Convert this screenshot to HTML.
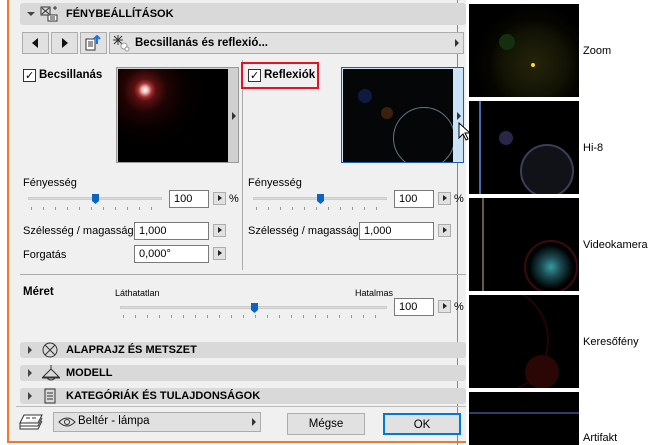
<!DOCTYPE html>
<html><head><meta charset="utf-8"><style>
*{box-sizing:border-box;margin:0;padding:0}
body{width:667px;height:445px;overflow:hidden;background:#fff;font-family:"Liberation Sans",sans-serif;font-size:11px;color:#000;position:relative}
.a{position:absolute}
.dlg{left:7px;top:0;width:459px;height:443px;background:#f0f0f0;border-left:2px solid #f07a28;border-bottom:2px solid #f07a28}
.bar{background:#d9d9d9;border-radius:3px}
.b{font-weight:bold}
.inp{background:#fff;border:1px solid #7a7a7a;height:18px;padding:2px 4px;font-size:11px}
.arr{width:13px;height:13px;background:#e1e1e1;border:1px solid #adadad}
.arr:after{content:"";position:absolute;left:4px;top:2px;border-left:4px solid #222;border-top:3.5px solid transparent;border-bottom:3.5px solid transparent}
.cb{width:13px;height:13px;border:1px solid #333;background:#fff}
.track{height:3px;background:#dcdcdc;border:1px solid #ccc}
.thumb{width:7px;height:10px;background:#0a64c8;clip-path:polygon(0 0,100% 0,100% 70%,50% 100%,0 70%)}
.btn{background:#e1e1e1;border:1px solid #adadad;text-align:center;line-height:20px}
.th{left:469px;width:110px;height:93px;background:#000;overflow:hidden}
.lab{left:583px;font-size:11px}
</style></head><body>
<div class="a dlg"></div>
<div class="a" style="left:457px;top:0;width:1px;height:445px;background:#888"></div>
<!-- header -->
<div class="a bar" style="left:20px;top:3px;width:446px;height:22px"></div>
<div class="a" style="left:27px;top:12px;border-top:4px solid #444;border-left:4px solid transparent;border-right:4px solid transparent"></div>
<svg class="a" style="left:40px;top:6px" width="18" height="16"><rect x="1" y="1" width="9" height="8" fill="none" stroke="#333"/><path d="M2 2l7 6M9 2l-7 6" stroke="#333"/><rect x="8" y="9" width="9" height="6" fill="#fff" stroke="#333"/><path d="M10 11h5M10 13h5M13 2h4M15 0v4" stroke="#333"/></svg>
<div class="a b" style="left:66px;top:8px;font-size:11px">FÉNYBEÁLLÍTÁSOK</div>
<!-- toolbar -->
<div class="a btn" style="left:22px;top:32px;width:27px;height:22px"></div>
<div class="a" style="left:32px;top:38px;border-right:6px solid #111;border-top:5px solid transparent;border-bottom:5px solid transparent"></div>
<div class="a btn" style="left:51px;top:32px;width:27px;height:22px"></div>
<div class="a" style="left:62px;top:38px;border-left:6px solid #111;border-top:5px solid transparent;border-bottom:5px solid transparent"></div>
<div class="a btn" style="left:80px;top:32px;width:27px;height:22px"></div>
<svg class="a" style="left:84px;top:35px" width="18" height="16"><rect x="2" y="4" width="9" height="11" fill="#fff" stroke="#333"/><path d="M4 7h5M4 9h5M4 11h5" stroke="#333"/><path d="M13 9V2M10 4l3-3 3 3" stroke="#1a73e8" stroke-width="2" fill="none"/></svg>
<div class="a btn" style="left:109px;top:32px;width:355px;height:22px"></div>
<svg class="a" style="left:112px;top:34px" width="18" height="18"><path d="M6 1v10M1 6h10M2 2l8 8M10 2l-8 8" stroke="#333"/><circle cx="12" cy="12" r="3" fill="#fff" stroke="#999"/><circle cx="15" cy="15" r="2" fill="#fff" stroke="#999"/></svg>
<div class="a b" style="left:135px;top:37px;font-size:11.5px">Becsillanás és reflexió...</div>
<div class="a" style="left:455px;top:39px;border-left:4px solid #333;border-top:4px solid transparent;border-bottom:4px solid transparent"></div>
<!-- checkboxes & previews -->
<div class="a cb" style="left:23px;top:69px"></div><div class="a" style="left:25px;top:69px;font-size:11px">✓</div>
<div class="a b" style="left:39px;top:69px;font-size:11.5px">Becsillanás</div>
<div class="a" style="left:116px;top:67px;width:123px;height:96px;background:#d0d0d0;border:1px solid #999"></div>
<div class="a" style="left:118px;top:69px;width:110px;height:93px;background:radial-gradient(circle at 27px 21px,#fff 0,#f4c0c0 3px,#a03030 7px,#5a1010 11px,#200404 22px,#080000 40px,#000 60px)"></div>
<div class="a" style="left:232px;top:112px;border-left:4px solid #333;border-top:4px solid transparent;border-bottom:4px solid transparent"></div>
<div class="a" style="left:242px;top:60px;width:1px;height:210px;background:#aaa"></div>
<div class="a" style="left:241px;top:62px;width:78px;height:27px;border:2px solid #e81123"></div>
<div class="a cb" style="left:248px;top:69px"></div><div class="a" style="left:250px;top:69px;font-size:11px">✓</div>
<div class="a b" style="left:264px;top:69px;font-size:11.5px">Reflexiók</div>
<div class="a" style="left:341px;top:67px;width:123px;height:96px;background:#cce4f7;border:1px solid #1a5fb4"></div>
<div class="a" style="left:343px;top:69px;width:110px;height:93px;background:#050608;overflow:hidden">
<div class="a" style="left:50px;top:38px;width:62px;height:62px;border-radius:50%;border:1px solid #5a7a80"></div>
<div class="a" style="left:15px;top:20px;width:14px;height:14px;border-radius:50%;background:#101a40"></div>
<div class="a" style="left:38px;top:38px;width:12px;height:12px;border-radius:50%;background:#3a220a"></div>
</div>
<div class="a" style="left:457px;top:112px;border-left:4px solid #333;border-top:4px solid transparent;border-bottom:4px solid transparent"></div>
<!-- left column sliders -->
<div class="a" style="left:23px;top:177px">Fényesség</div>
<div class="a track" style="left:28px;top:197px;width:134px"></div>
<div class="a thumb" style="left:92px;top:194px"></div>
<div class="a" style="left:31px;top:207px;width:130px;height:3px;background:repeating-linear-gradient(90deg,#999 0 1px,transparent 1px 12px)"></div>
<div class="a inp" style="left:169px;top:190px;width:40px">100</div>
<div class="a arr" style="left:213px;top:192px"></div>
<div class="a" style="left:229px;top:193px">%</div>
<div class="a" style="left:23px;top:225px">Szélesség / magasság</div>
<div class="a inp" style="left:134px;top:222px;width:75px">1,000</div>
<div class="a arr" style="left:213px;top:224px"></div>
<div class="a" style="left:23px;top:249px">Forgatás</div>
<div class="a inp" style="left:134px;top:245px;width:75px">0,000°</div>
<div class="a arr" style="left:213px;top:247px"></div>
<!-- right column -->
<div class="a" style="left:248px;top:177px">Fényesség</div>
<div class="a track" style="left:253px;top:197px;width:134px"></div>
<div class="a thumb" style="left:317px;top:194px"></div>
<div class="a" style="left:256px;top:207px;width:130px;height:3px;background:repeating-linear-gradient(90deg,#999 0 1px,transparent 1px 12px)"></div>
<div class="a inp" style="left:394px;top:190px;width:40px">100</div>
<div class="a arr" style="left:438px;top:192px"></div>
<div class="a" style="left:454px;top:193px">%</div>
<div class="a" style="left:248px;top:225px">Szélesség / magasság</div>
<div class="a inp" style="left:359px;top:222px;width:75px">1,000</div>
<div class="a arr" style="left:438px;top:224px"></div>
<div class="a" style="left:20px;top:274px;width:446px;height:1px;background:#aaa"></div>
<!-- Méret -->
<div class="a b" style="left:23px;top:286px;font-size:11.5px">Méret</div>
<div class="a" style="left:115px;top:288px;font-size:9px">Láthatatlan</div>
<div class="a" style="left:355px;top:288px;font-size:9px">Hatalmas</div>
<div class="a track" style="left:120px;top:306px;width:267px"></div>
<div class="a thumb" style="left:251px;top:303px"></div>
<div class="a" style="left:123px;top:315px;width:264px;height:3px;background:repeating-linear-gradient(90deg,#999 0 1px,transparent 1px 12px)"></div>
<div class="a inp" style="left:394px;top:298px;width:40px">100</div>
<div class="a arr" style="left:438px;top:300px"></div>
<div class="a" style="left:454px;top:301px">%</div>
<!-- sections -->
<div class="a bar" style="left:20px;top:342px;width:446px;height:16px"></div>
<div class="a bar" style="left:20px;top:365px;width:446px;height:16px"></div>
<div class="a bar" style="left:20px;top:388px;width:446px;height:16px"></div>
<div class="a" style="left:28px;top:346px;border-left:4px solid #444;border-top:4px solid transparent;border-bottom:4px solid transparent"></div>
<div class="a" style="left:28px;top:369px;border-left:4px solid #444;border-top:4px solid transparent;border-bottom:4px solid transparent"></div>
<div class="a" style="left:28px;top:392px;border-left:4px solid #444;border-top:4px solid transparent;border-bottom:4px solid transparent"></div>
<svg class="a" style="left:41px;top:342px" width="18" height="16"><circle cx="9" cy="8" r="7" fill="none" stroke="#333"/><path d="M4 3l10 10M14 3L4 13" stroke="#333"/></svg>
<svg class="a" style="left:40px;top:364px" width="22" height="18"><path d="M11 1v4M3 13L11 5l8 8z" fill="none" stroke="#333"/><path d="M2 14h18M7 14q4 4 8 0" fill="none" stroke="#333"/></svg>
<svg class="a" style="left:44px;top:388px" width="12" height="16"><rect x="1" y="1" width="10" height="14" fill="none" stroke="#333"/><path d="M3 5h6M3 8h6M3 11h6" stroke="#333"/></svg>
<div class="a b" style="left:66px;top:344px;font-size:11px">ALAPRAJZ ÉS METSZET</div>
<div class="a b" style="left:66px;top:367px;font-size:11px">MODELL</div>
<div class="a b" style="left:66px;top:390px;font-size:11px">KATEGÓRIÁK ÉS TULAJDONSÁGOK</div>
<div class="a" style="left:16px;top:406px;width:450px;height:1px;background:#bbb"></div>
<!-- bottom -->
<svg class="a" style="left:18px;top:413px" width="26" height="18"><path d="M6 2h18l-4 8H2z M2 10v3h18l4-8 M2 13v3h18l4-8" fill="#fff" stroke="#333"/><path d="M8 5h4M14 5h4" stroke="#333"/></svg>
<div class="a btn" style="left:53px;top:412px;width:208px;height:20px"></div>
<svg class="a" style="left:58px;top:417px" width="18" height="10"><path d="M1 5q8-8 16 0q-8 8-16 0z" fill="none" stroke="#333"/><circle cx="9" cy="5" r="2.5" fill="none" stroke="#333"/></svg>
<div class="a" style="left:78px;top:415px;font-size:11.5px">Beltér - lámpa</div>
<div class="a" style="left:252px;top:418px;border-left:4px solid #333;border-top:4px solid transparent;border-bottom:4px solid transparent"></div>
<div class="a btn" style="left:287px;top:413px;width:78px;height:22px;font-size:11.5px">Mégse</div>
<div class="a btn" style="left:383px;top:413px;width:78px;height:22px;border:2px solid #0078d7;font-size:11.5px">OK</div>
<!-- right popup -->
<div class="a th" style="top:4px;background:radial-gradient(circle at 65px 60px,#24240a 0,#141406 30px,#050500 46px,#000 60px)"><div class="a" style="left:30px;top:30px;width:16px;height:16px;border-radius:50%;background:#123010"></div><div class="a" style="left:62px;top:59px;width:4px;height:4px;background:#ffd040;border-radius:50%"></div></div>
<div class="a lab" style="top:45px">Zoom</div>
<div class="a th" style="top:101px"><div class="a" style="left:10px;top:0;width:2px;height:93px;background:#4a6ab0"></div><div class="a" style="left:51px;top:43px;width:54px;height:54px;border-radius:50%;border:2px solid #3a3e58;background:#101218"></div><div class="a" style="left:30px;top:30px;width:14px;height:14px;border-radius:50%;background:#2a2648"></div></div>
<div class="a lab" style="top:142px">Hi-8</div>
<div class="a th" style="top:198px"><div class="a" style="left:13px;top:0;width:2px;height:93px;background:#6a5a48"></div><div class="a" style="left:55px;top:42px;width:54px;height:54px;border-radius:50%;border:2px solid #3a0a10;background:radial-gradient(circle,#3a9aa0 0,#1a4a50 10px,#000 22px)"></div></div>
<div class="a lab" style="top:239px">Videokamera</div>
<div class="a th" style="top:295px"><div class="a" style="left:-30px;top:-10px;width:110px;height:110px;border-radius:50%;border:2px solid #220404"></div><div class="a" style="left:56px;top:60px;width:34px;height:34px;border-radius:50%;background:#2a0604"></div></div>
<div class="a lab" style="top:336px">Keresőfény</div>
<div class="a th" style="top:392px;height:53px"><div class="a" style="left:0;top:20px;width:110px;height:2px;background:#2a3e70"></div></div>
<div class="a lab" style="top:432px">Artifakt</div>
<svg class="a" style="left:458px;top:122px" width="12" height="20"><path d="M1 1v15l4-4 3 6 2-1-3-6h5z" fill="#fff" stroke="#000"/></svg>
</body></html>
